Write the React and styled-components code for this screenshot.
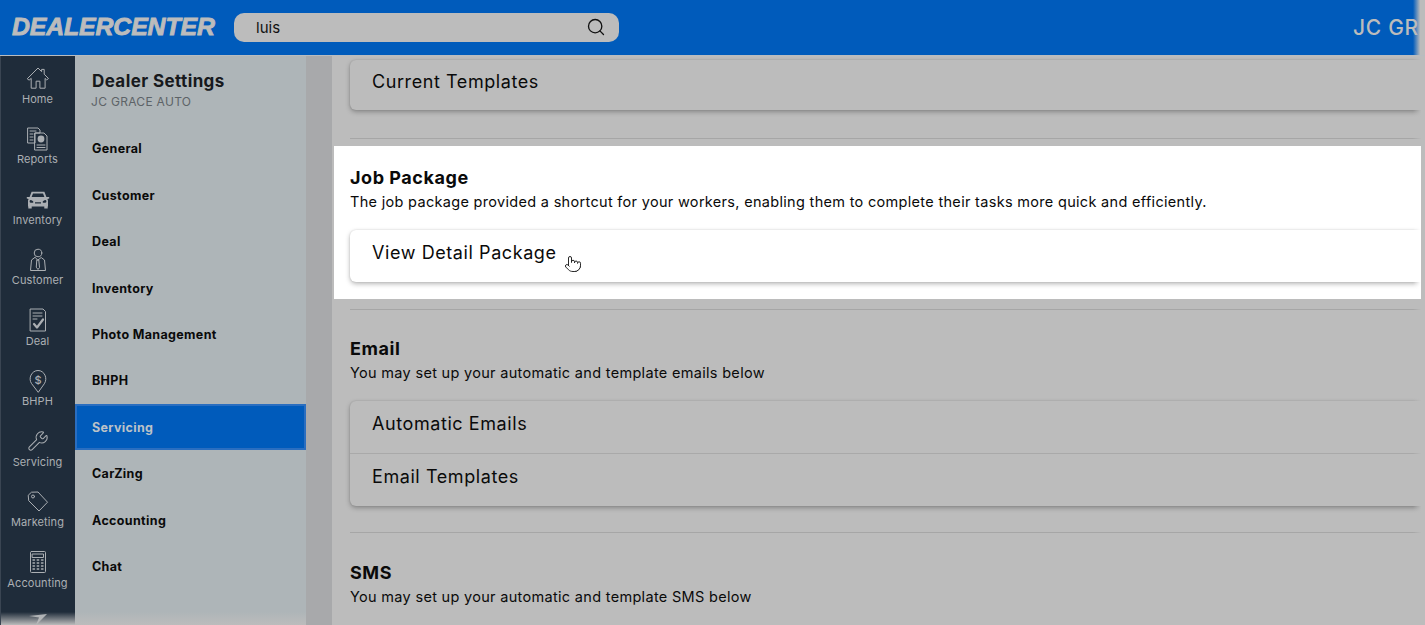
import React from 'react';
import styled, { createGlobalStyle } from 'styled-components';
import { Search, Wrench, Pointer } from 'lucide-react';

const GlobalStyle = createGlobalStyle`
  html, body {
    margin: 0;
    padding: 0;
    background: #bcbcbc;
    font-family: "Inter", "Noto Sans", sans-serif;
    overflow: hidden;
  }
  * { box-sizing: border-box; }
`;

const stroke = { fill: 'none', stroke: 'currentColor', strokeWidth: 1, strokeLinejoin: 'round', strokeLinecap: 'round' };

const HomeIcon = () => (
  <svg width="24" height="24" viewBox="0 0 24 24" {...stroke}>
    <path d="M1.5 12.5 12 2l3.6 3.6V3.4h2.6v4.8l4.3 4.3-1.800 1.400-1.600-1.500v9.800h-5.200v-7h-3.800v7H5.200v-9.800l-1.800 1.500z" />
  </svg>
);

const ReportsIcon = () => (
  <svg width="24" height="24" viewBox="0 0 24 24" {...stroke}>
    <path d="M2 1h10l2 2v3H9v10H2z" />
    <path d="M4 4h6M4 7h3M4 10h3M4 13h3" />
    <path d="M9 6h9l3 3v14H9z" />
    <circle cx="15" cy="12" r="3.400" fill="currentColor" stroke="none" />
    <path d="M11 18h8M11 20.500h8" />
  </svg>
);

const CarIcon = () => (
  <svg width="24" height="24" viewBox="0 0 24 24">
    <path
      fill="currentColor"
      d="M5.600 4.800h12.800l2 5.200h2.800v1.400l-1.800.6.6 1.600v6h-.3v2h-3.400v-2H5.700v2H2.300v-2H2v-6l.6-1.600-1.800-.6V10h2.800zM7 6.400 5.600 10h12.800L17 6.400zM5 13a1.400 1.400 0 1 0 0 2.800h2.200v-1.600zm14 0-2.200 1.200v1.600H19A1.400 1.400 0 1 0 19 13zM9 15.200v1.400h6v-1.400z"
      fillRule="evenodd"
    />
  </svg>
);

const CustomerIcon = () => (
  <svg width="24" height="24" viewBox="0 0 24 24" {...stroke}>
    <circle cx="12" cy="5" r="3.800" />
    <path d="M8.800 9.500 5.500 12 4.500 22.500h15L18.500 12l-3.300-2.500L12 12z" />
    <path d="M11.200 12h1.600l.7 7.500-1.500 2-1.500-2z" />
  </svg>
);

const DealIcon = () => (
  <svg width="24" height="24" viewBox="0 0 24 24" {...stroke}>
    <path d="M4.500 1h12.500l2.500 2.500V23H4.500z" />
    <path d="M7 5h9M7 8h9M7 11h4" />
    <path d="m8 16 3 3.500 6-8" strokeWidth="2.200" />
  </svg>
);

const BhphIcon = () => (
  <svg width="24" height="24" viewBox="0 0 24 24" {...stroke}>
    <path d="M12 23 5.500 14.500C2 9.500 5.500 1.500 12 1.500s10 8 6.500 13z" />
    <text x="12" y="14.800" textAnchor="middle" fontSize="11" fontWeight="500" fontFamily="Inter" fill="currentColor" stroke="none">$</text>
  </svg>
);

const TagIcon = () => (
  <svg width="24" height="24" viewBox="0 0 24 24" {...stroke}>
    <path d="M2.500 5 5.500 2.200l6.500-.2 9.500 10.200L13 21 3 11z" />
    <circle cx="7" cy="6.500" r="1.500" />
  </svg>
);

const CalculatorIcon = () => (
  <svg width="24" height="24" viewBox="0 0 24 24" {...stroke}>
    <rect x="4.500" y="1.500" width="15" height="21" rx="1" />
    <rect x="6.500" y="4" width="11" height="3.500" />
    <path d="M7 10h1.500M11.200 10h1.500M15.500 10h1.500M7 13h1.500M11.200 13h1.500M15.500 13h1.500M7 16h1.500M11.200 16h1.500M15.500 16h1.500M7 19h1.500M11.200 19h1.500M15.500 19h1.500" strokeWidth="1.400" />
  </svg>
);

const SendIcon = () => (
  <svg width="24" height="24" viewBox="0 0 24 24">
    <path fill="currentColor" d="M3 5 21 3 10 14l3-7.500z" />
  </svg>
);

const railItems = [
  { label: 'Home', icon: <HomeIcon /> },
  { label: 'Reports', icon: <ReportsIcon /> },
  { label: 'Inventory', icon: <CarIcon /> },
  { label: 'Customer', icon: <CustomerIcon /> },
  { label: 'Deal', icon: <DealIcon /> },
  { label: 'BHPH', icon: <BhphIcon /> },
  { label: 'Servicing', icon: <Wrench size={22} strokeWidth={1.1} /> },
  { label: 'Marketing', icon: <TagIcon /> },
  { label: 'Accounting', icon: <CalculatorIcon /> },
  { label: '', icon: <SendIcon /> },
];

const menuItems = [
  'General',
  'Customer',
  'Deal',
  'Inventory',
  'Photo Management',
  'BHPH',
  'Servicing',
  'CarZing',
  'Accounting',
  'Chat',
];

const App = () => {
  return (
    <Page>
      <GlobalStyle />
      <TopBar>
        <Logo>DEALERCENTER</Logo>
        <SearchBox>
          <SearchText>luis</SearchText>
          <Search size={20} strokeWidth={1.6} color="#111" />
        </SearchBox>
        <DealerName>JC GRACE AUTO</DealerName>
        <TopBarFade />
      </TopBar>
      <Body>
        <Rail>
          {railItems.map((item, i) => (
            <RailItem key={i}>
              <RailIcon>{item.icon}</RailIcon>
              <RailLabel>{item.label}</RailLabel>
            </RailItem>
          ))}
          <BottomFade />
        </Rail>
        <SidePanel>
          <PanelTitle>Dealer Settings</PanelTitle>
          <PanelSubtitle>JC GRACE AUTO</PanelSubtitle>
          <Menu>
            {menuItems.map((name) => (
              <MenuItem key={name} $active={name === 'Servicing'}>
                {name}
              </MenuItem>
            ))}
          </Menu>
          <BottomFade />
        </SidePanel>
        <Gutter />
        <Main>
          <Indented>
            <Card>
              <CardRow $height={50}>Current Templates</CardRow>
            </Card>
            <Divider $top={28} $bottom={7} />
          </Indented>
          <Spotlight>
            <SectionTitle>Job Package</SectionTitle>
            <SectionText>
              The job package provided a shortcut for your workers, enabling them to complete their tasks more quick and efficiently.
            </SectionText>
            <Card $light>
              <CardRow>
                View Detail Package
                <Cursor>
                  <Pointer size={18} strokeWidth={1.2} fill="#fff" color="#111" />
                </Cursor>
              </CardRow>
            </Card>
          </Spotlight>
          <Indented>
            <Divider $top={10} $bottom={27} />
            <SectionTitle>Email</SectionTitle>
            <SectionText>You may set up your automatic and template emails below</SectionText>
            <Card>
              <CardRow>Automatic Emails</CardRow>
              <CardRow $line $height={53}>Email Templates</CardRow>
            </Card>
            <Divider $top={26} $bottom={28} />
            <SectionTitle>SMS</SectionTitle>
            <SectionText>You may set up your automatic and template SMS below</SectionText>
          </Indented>
        </Main>
      </Body>
    </Page>
  );
};

export default App;

const Page = styled.div`
  width: 1425px;
  height: 625px;
  display: flex;
  flex-direction: column;
  overflow: hidden;
  background: #bcbcbc;
`;

const TopBar = styled.header`
  position: relative;
  flex: none;
  height: 56px;
  display: flex;
  align-items: center;
  padding: 0 0 1px 12px;
  background: #005bbb;
  border-bottom: 1px solid #b8bcc0;
  overflow: hidden;
`;

const Logo = styled.div`
  flex: none;
  width: 204px;
  font-family: "Liberation Sans", sans-serif;
  font-size: 24.8px;
  font-weight: 700;
  font-style: italic;
  letter-spacing: -0.1px;
  color: #bcbcbc;
  -webkit-text-stroke: 0.9px #bcbcbc;
  white-space: nowrap;
`;

const SearchBox = styled.div`
  flex: none;
  width: 385px;
  height: 29px;
  margin-left: 18px;
  padding: 0 13px 0 22px;
  display: flex;
  align-items: center;
  justify-content: space-between;
  background: #bcbcbc;
  border-radius: 10px;
`;

const SearchText = styled.span`
  font-size: 15px;
  color: #111;
`;

const DealerName = styled.div`
  flex: none;
  margin-left: 734px;
  font-size: 21px;
  font-weight: 500;
  letter-spacing: 0.7px;
  color: #bcbcbc;
  white-space: nowrap;
`;

const TopBarFade = styled.div`
  position: absolute;
  top: 0;
  right: 0;
  bottom: 0;
  width: 12px;
  background: linear-gradient(to right, rgba(188, 188, 188, 0), #bcbcbc 60%);
`;

const Body = styled.div`
  flex: 1;
  min-height: 0;
  display: flex;
`;

const Rail = styled.nav`
  position: relative;
  flex: none;
  width: 75px;
  overflow: hidden;
  background: #1f2c3a;
  border-left: 1px solid #3a4552;
`;

const RailItem = styled.div`
  height: 60.5px;
  padding-top: 10px;
  margin-left: -1px;
  display: flex;
  flex-direction: column;
  align-items: center;
  color: #abafb3;
`;

const RailIcon = styled.div`
  height: 24px;
  display: flex;
  align-items: center;
  justify-content: center;
`;

const RailLabel = styled.div`
  height: 14px;
  margin-top: 1.6px;
  font-size: 11px;
  line-height: 14px;
  letter-spacing: 0.1px;
  white-space: nowrap;
`;

const BottomFade = styled.div`
  position: absolute;
  left: 0;
  right: 0;
  bottom: 0;
  height: 13px;
  background: linear-gradient(to bottom, rgba(188, 188, 188, 0), #bcbcbc);
`;

const SidePanel = styled.aside`
  position: relative;
  flex: none;
  width: 231px;
  padding-top: 14px;
  background: #aeb5b8;
  overflow: hidden;
`;

const PanelTitle = styled.div`
  padding-left: 17px;
  font-size: 17px;
  line-height: 22px;
  font-weight: 700;
  letter-spacing: 0.4px;
  color: #17191c;
`;

const PanelSubtitle = styled.div`
  margin-top: 2px;
  padding-left: 16px;
  font-size: 12px;
  line-height: 16px;
  letter-spacing: 0.3px;
  color: #5d6367;
`;

const Menu = styled.div`
  margin-top: 15.7px;
`;

const MenuItem = styled.div`
  height: 46.4px;
  padding-left: 17px;
  display: flex;
  align-items: center;
  font-size: 12.5px;
  font-weight: 700;
  letter-spacing: 0.35px;
  color: ${(p) => (p.$active ? '#bcc2c8' : '#0a0a0a')};
  background: ${(p) => (p.$active ? '#005bbb' : 'transparent')};
  box-shadow: ${(p) => (p.$active ? 'inset 0 0 0 2px #2a6ec0' : 'none')};
`;

const Gutter = styled.div`
  flex: none;
  width: 26px;
  background: #a8a9ab;
`;

const Main = styled.main`
  position: relative;
  flex: 1;
  min-width: 0;
  padding-top: 4px;
  color: #0a0a0a;
  &::after {
    content: '';
    position: absolute;
    top: 0;
    right: 0;
    bottom: 0;
    width: 12px;
    background: linear-gradient(to right, rgba(188, 188, 188, 0), #bcbcbc 70%);
  }
`;

const Indented = styled.div`
  padding-left: 18px;
`;

const Spotlight = styled.section`
  position: relative;
  z-index: 1;
  margin: 0 4px 0 2px;
  padding: 20px 0 17px 16px;
  background: #fff;
  overflow: hidden;
  &::after {
    content: '';
    position: absolute;
    top: 0;
    right: 0;
    bottom: 0;
    width: 8px;
    background: linear-gradient(to right, rgba(255, 255, 255, 0), #fff);
  }
`;

const Divider = styled.div`
  height: 1px;
  margin: ${(p) => p.$top}px 0 ${(p) => p.$bottom}px;
  background: #a6a6a6;
`;

const SectionTitle = styled.h3`
  margin: 0;
  font-size: 18px;
  line-height: 24px;
  font-weight: 700;
  letter-spacing: 0.55px;
`;

const SectionText = styled.p`
  margin: 2px 0 0;
  font-size: 14.5px;
  line-height: 20px;
  letter-spacing: 0.31px;
  white-space: nowrap;
`;

const Card = styled.div`
  margin-top: 18px;
  border-radius: 6px 0 0 6px;
  background: ${(p) => (p.$light ? '#fff' : '#bcbcbc')};
  box-shadow: 0 2px 5px rgba(0, 0, 0, 0.28), 0 0 2px rgba(0, 0, 0, 0.12);
  &:first-child {
    margin-top: 0;
  }
`;

const CardRow = styled.div`
  position: relative;
  height: ${(p) => p.$height || 52}px;
  padding: 0 0 7px 22px;
  display: flex;
  align-items: center;
  font-size: 18px;
  letter-spacing: 0.58px;
  border-top: ${(p) => (p.$line ? '1px solid #a9a9a9' : 'none')};
`;

const Cursor = styled.span`
  position: absolute;
  left: 214px;
  top: 25px;
  display: flex;
`;
